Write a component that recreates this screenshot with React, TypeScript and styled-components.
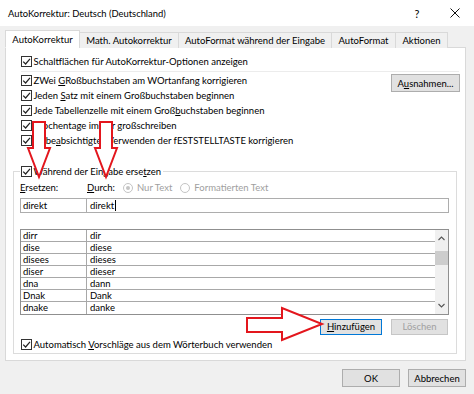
import React from 'react';
import styled, { createGlobalStyle } from 'styled-components';

const GlobalStyle = createGlobalStyle`
  html, body { margin: 0; padding: 0; background: #f0f0f0; }
  body {
    font-family: Lato, Roboto, "Liberation Sans", sans-serif;
    font-size: 9.5px;
    color: #000;
  }
  * { box-sizing: border-box; }
`;

const RED = '#e3161d';

const Dialog = styled.div`
  position: relative;
  width: 474px;
  height: 394px;
  background: #f0f0f0;
  display: flex;
  flex-direction: column;
  overflow: hidden;
`;

const TitleBar = styled.div`
  height: 26px;
  background: #fff;
  display: flex;
  align-items: center;
  padding-left: 8px;
  font-size: 9.4px;
`;

const Title = styled.div`
  flex: 1;
`;

const TitleButton = styled.div`
  width: 38px;
  height: 26px;
  display: flex;
  align-items: center;
  justify-content: center;
  font-size: 11px;
`;

const TabStrip = styled.div`
  display: flex;
  align-items: flex-end;
  height: 18px;
  margin-top: 4px;
  padding-left: 5px;
  position: relative;
  z-index: 1;
  margin-bottom: -1px;
`;

const Tab = styled.div<{ $active?: boolean; $w: number }>`
  width: ${p => p.$w}px;
  height: ${p => (p.$active ? '18px' : '16px')};
  display: flex;
  align-items: center;
  justify-content: center;
  white-space: nowrap;
  border: 1px solid #d9d9d9;
  border-bottom: ${p => (p.$active ? '1px solid #fff' : 'none')};
  background: ${p => (p.$active ? '#fff' : '#f0f0f0')};
  & + & { margin-left: -1px; }
`;

const Panel = styled.div`
  height: 314px;
  margin: 0 8px 0 5px;
  background: #fff;
  border: 1px solid #d9d9d9;
  padding: 6px 4px 0 7px;
  display: flex;
  flex-direction: column;
`;

const CheckRow = styled.div<{ $indent?: boolean }>`
  height: 15px;
  display: flex;
  align-items: center;
  gap: 1.5px;
  white-space: nowrap;
  padding-left: ${p => (p.$indent ? '8px' : '0')};
`;

const Box = styled.span`
  width: 11px;
  height: 11px;
  border: 1px solid #333;
  background: #fff;
  display: inline-flex;
  align-items: center;
  justify-content: center;
  flex-shrink: 0;
`;

const Acc = styled.span`
  text-decoration: underline;
  text-underline-offset: 1px;
`;

const Separator = styled.div`
  height: 1px;
  background: #ececec;
  margin: 2px 2px 1px 8px;
`;

const OptionsArea = styled.div`
  display: flex;
  justify-content: space-between;
  align-items: flex-start;
`;

const OptionList = styled.div`
  display: flex;
  flex-direction: column;
`;

const Button = styled.div<{ $w: number; $h?: number; $default?: boolean; $disabled?: boolean }>`
  width: ${p => p.$w}px;
  height: ${p => p.$h ?? 18}px;
  background: #e1e1e1;
  border: 1px solid ${p => (p.$default ? '#0078d7' : p.$disabled ? '#c6c6c6' : '#adadad')};
  color: ${p => (p.$disabled ? '#a0a0a0' : '#000')};
  display: flex;
  align-items: center;
  justify-content: center;
  white-space: nowrap;
  flex-shrink: 0;
`;

const Group = styled.fieldset`
  margin: 16px 4px 0 0;
  min-width: 0;
  border: 1px solid #dcdcdc;
  padding: 1.5px 7px 1px 6px;
  display: flex;
  flex-direction: column;
`;

const Legend = styled.legend`
  padding: 0 2px 0 1px;
`;

const FieldGrid = styled.div<{ $h: number; $mt: number }>`
  display: grid;
  grid-template-columns: 67px 1fr;
  height: ${p => p.$h}px;
  margin-top: ${p => p.$mt}px;
  align-items: center;
`;

const Label = styled.div`
  display: flex;
  align-items: center;
  white-space: nowrap;
`;

const Radio = styled.span<{ $checked?: boolean }>`
  width: 10px;
  height: 10px;
  border-radius: 50%;
  border: 1px solid #c4c4c4;
  background: #fff;
  margin: 0 4px 0 8px;
  display: inline-flex;
  align-items: center;
  justify-content: center;
  &::after {
    content: '';
    width: 4px;
    height: 4px;
    border-radius: 50%;
    background: ${p => (p.$checked ? '#c4c4c4' : 'transparent')};
  }
`;

const Disabled = styled.span`
  color: #a0a0a0;
`;

const Input = styled.div<{ $first?: boolean }>`
  height: 15px;
  border: 1px solid #adadad;
  margin-left: ${p => (p.$first ? '0' : '-1px')};
  padding-left: ${p => (p.$first ? '2px' : '3px')};
  display: flex;
  align-items: center;
  background: #fff;
`;

const Caret = styled.span`
  width: 1px;
  height: 11px;
  background: #000;
  margin-left: 1px;
`;

const List = styled.div`
  margin-top: 16px;
  height: 86px;
  border: 1px solid #8f8f8f;
  display: flex;
`;

const Rows = styled.div`
  flex: 1;
  display: flex;
  flex-direction: column;
`;

const ListRow = styled.div`
  display: grid;
  grid-template-columns: 66px 1fr;
  height: 12px;
  border-bottom: 1px solid #a8a8a8;
  &:last-child { border-bottom: none; }
`;

const Cell = styled.div<{ $first?: boolean }>`
  line-height: 11px;
  padding-left: ${p => (p.$first ? '2px' : '3px')};
  border-right: ${p => (p.$first ? '1px solid #a8a8a8' : 'none')};
  white-space: nowrap;
  overflow: hidden;
`;

const ScrollBar = styled.div`
  width: 13px;
  background: #f0f0f0;
  display: flex;
  flex-direction: column;
  align-items: center;
`;

const ScrollArrow = styled.div`
  height: 17px;
  width: 13px;
  display: flex;
  align-items: center;
  justify-content: center;
`;

const Thumb = styled.div`
  width: 13px;
  height: 14px;
  background: #cdcdcd;
  margin-top: 4px;
  flex: 0 0 14px;
`;

const Spacer = styled.div`
  flex: 1;
`;

const ButtonRow = styled.div`
  display: flex;
  justify-content: flex-end;
  gap: 9px;
  margin-top: 4px;
  padding-right: 1px;
`;

const Footer = styled.div`
  display: flex;
  justify-content: flex-end;
  gap: 8px;
  padding: 0 8px 0 0;
  margin-top: 8px;
`;

const ArrowSvg = styled.svg<{ $x: number; $y: number }>`
  position: absolute;
  left: ${p => p.$x}px;
  top: ${p => p.$y}px;
  overflow: visible;
  z-index: 5;
`;

function Check() {
  return (
    <Box>
      <svg width="9" height="9" viewBox="0 0 9 9">
        <path d="M1.2 4.6 L3.6 7 L8 1.8" fill="none" stroke="#222" strokeWidth="1.2" />
      </svg>
    </Box>
  );
}

function Chevron({ up }: { up?: boolean }) {
  return (
    <svg width="7" height="5" viewBox="0 0 7 5">
      <path d={up ? 'M0.5 4 L3.5 1 L6.5 4' : 'M0.5 1 L3.5 4 L6.5 1'} fill="none" stroke="#555" strokeWidth="1.1" />
    </svg>
  );
}

function DownArrow({ x, y }: { x: number; y: number }) {
  return (
    <ArrowSvg $x={x} $y={y} width="26" height="60" viewBox="0 0 26 60">
      <polygon points="7,2 19,2 19,28 24,28 13,57 2,28 7,28" fill="#fff" stroke={RED} strokeWidth="2" strokeLinejoin="miter" />
    </ArrowSvg>
  );
}

function RightArrow({ x, y }: { x: number; y: number }) {
  return (
    <ArrowSvg $x={x} $y={y} width="80" height="36" viewBox="0 0 80 36">
      <polygon points="2,12 37,12 37,2 77,18 37,34 37,26 2,26" fill="#fff" stroke={RED} strokeWidth="2" />
    </ArrowSvg>
  );
}

const entries: [string, string][] = [
  ['dirr', 'dir'],
  ['dise', 'diese'],
  ['disees', 'dieses'],
  ['diser', 'dieser'],
  ['dna', 'dann'],
  ['Dnak', 'Dank'],
  ['dnake', 'danke'],
];

export default function App() {
  return (
    <Dialog>
      <GlobalStyle />
      <TitleBar>
        <Title>AutoKorrektur: Deutsch (Deutschland)</Title>
        <TitleButton>?</TitleButton>
        <TitleButton>
          <svg width="10" height="10" viewBox="0 0 10 10">
            <path d="M0.5 0.5 L9.5 9.5 M9.5 0.5 L0.5 9.5" stroke="#111" strokeWidth="1" />
          </svg>
        </TitleButton>
      </TitleBar>

      <TabStrip>
        <Tab $active $w={75}>AutoKorrektur</Tab>
        <Tab $w={100}>Math. Autokorrektur</Tab>
        <Tab $w={154}>AutoFormat während der Eingabe</Tab>
        <Tab $w={65}>AutoFormat</Tab>
        <Tab $w={53}>Aktionen</Tab>
      </TabStrip>

      <Panel>
        <CheckRow $indent>
          <Check /><span>Schaltflächen für AutoKorrektur-Optionen anzeigen</span>
        </CheckRow>
        <Separator />
        <OptionsArea>
          <OptionList>
            <CheckRow $indent>
              <Check /><span>ZWei <Acc>G</Acc>Roßbuchstaben am WOrtanfang korrigieren</span>
            </CheckRow>
            <CheckRow $indent>
              <Check /><span>Jeden <Acc>S</Acc>atz mit einem Großbuchstaben beginnen</span>
            </CheckRow>
            <CheckRow $indent>
              <Check /><span>Jede Tabellenzelle mit einem Groß<Acc>b</Acc>uchstaben beginnen</span>
            </CheckRow>
            <CheckRow $indent>
              <Check /><span>Wochentage immer großschreiben</span>
            </CheckRow>
            <CheckRow $indent>
              <Check /><span>Unbe<Acc>a</Acc>bsichtigtes Verwenden der fESTSTELLTASTE korrigieren</span>
            </CheckRow>
          </OptionList>
          <Button $w={69} style={{ marginTop: 1, marginRight: 1 }}>
            <span>A<Acc>u</Acc>snahmen...</span>
          </Button>
        </OptionsArea>

        <Group>
          <Legend>
            <CheckRow>
              <Check /><span>Während der Eingabe erse<Acc>t</Acc>zen</span>
            </CheckRow>
          </Legend>
          <FieldGrid $h={14} $mt={0}>
            <Label><span><Acc>E</Acc>rsetzen:</span></Label>
            <Label>
              <span><Acc>D</Acc>urch:</span>
              <Radio $checked />
              <Disabled>Nur Text</Disabled>
              <Radio />
              <Disabled>Formatierten Text</Disabled>
            </Label>
          </FieldGrid>
          <FieldGrid $h={15} $mt={3}>
            <Input $first>direkt</Input>
            <Input>direkt<Caret /></Input>
          </FieldGrid>

          <List>
            <Rows>
              {entries.map(([a, b]) => (
                <ListRow key={a}>
                  <Cell $first>{a}</Cell>
                  <Cell>{b}</Cell>
                </ListRow>
              ))}
            </Rows>
            <ScrollBar>
              <ScrollArrow><Chevron up /></ScrollArrow>
              <Thumb />
              <Spacer />
              <ScrollArrow><Chevron /></ScrollArrow>
            </ScrollBar>
          </List>

          <ButtonRow>
            <Button $w={62} $h={16} $default>
              <span><Acc>H</Acc>inzufügen</span>
            </Button>
            <Button $w={57} $h={16} $disabled>Löschen</Button>
          </ButtonRow>

          <CheckRow style={{ marginTop: 2.5, paddingLeft: 1 }}>
            <Check /><span>Automatisch <Acc>V</Acc>orschläge aus dem Wörterbuch verwenden</span>
          </CheckRow>
        </Group>
      </Panel>

      <Footer>
        <Button $w={58}>OK</Button>
        <Button $w={58}>Abbrechen</Button>
      </Footer>

      <DownArrow x={26} y={120} />
      <DownArrow x={93} y={120} />
      <RightArrow x={245} y={306} />
    </Dialog>
  );
}
